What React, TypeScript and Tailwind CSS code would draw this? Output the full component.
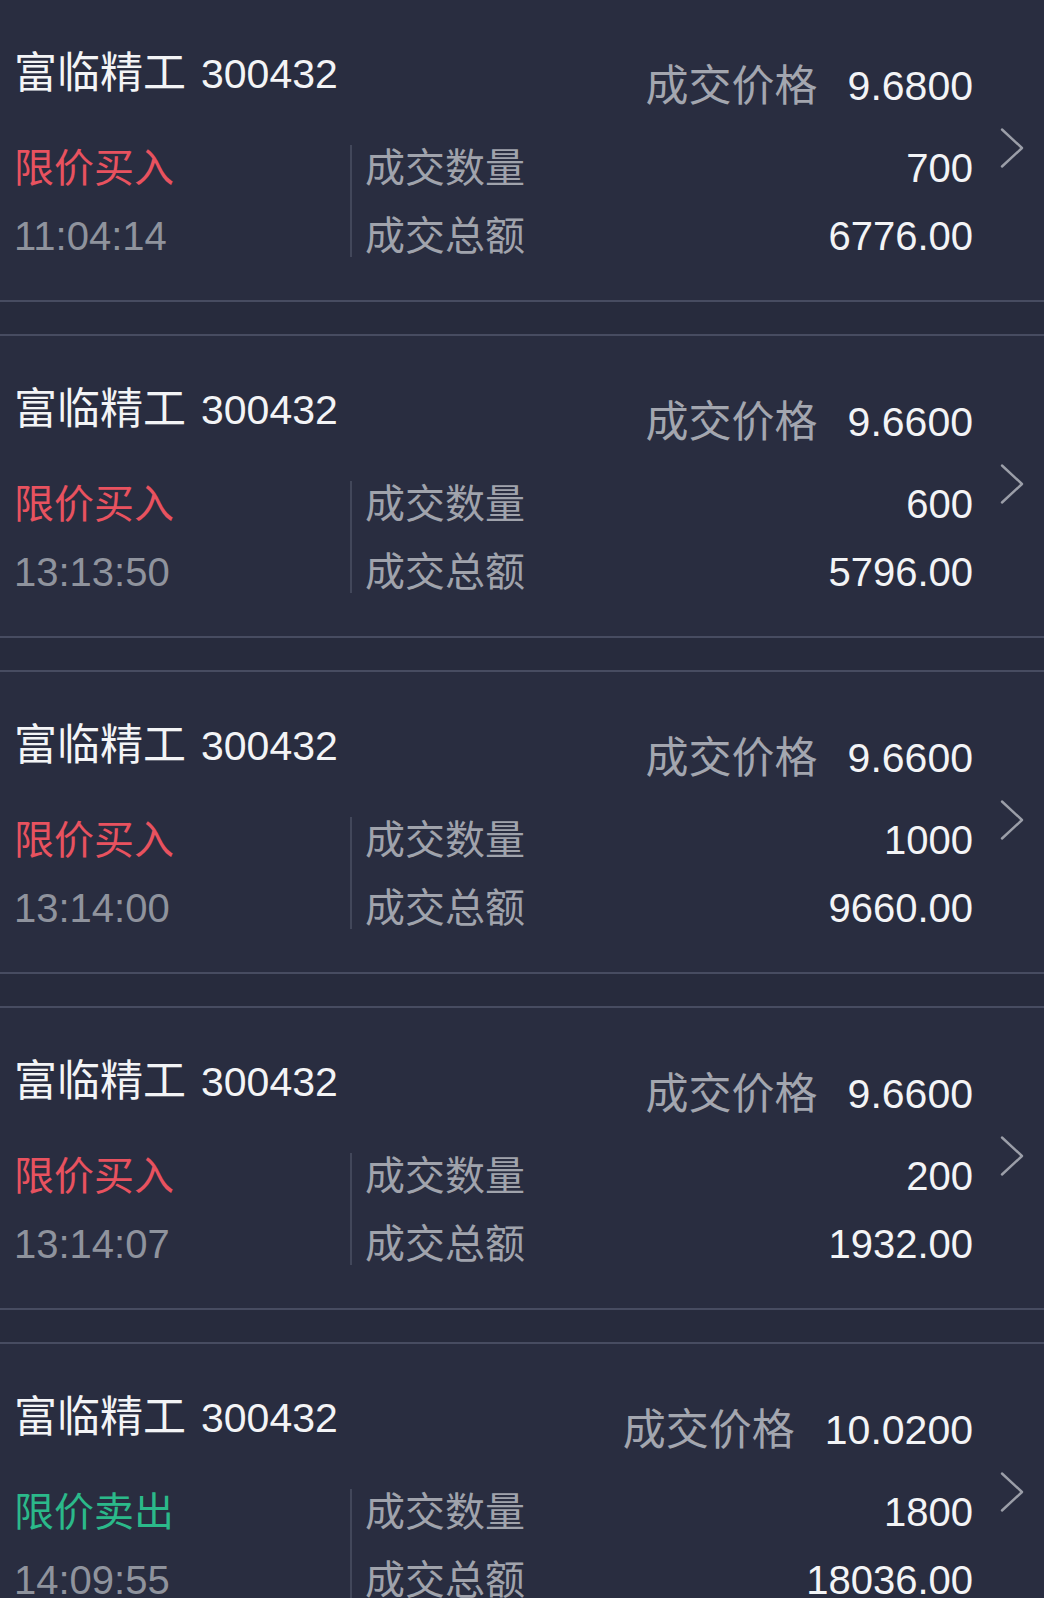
import type { ReactNode } from 'react';

type Trade = {
  side: 'buy' | 'sell';
  time: string;
  price: string;
  qty: string;
  amount: string;
};

const trades: Trade[] = [
  { side: 'buy', time: '11:04:14', price: '9.6800', qty: '700', amount: '6776.00' },
  { side: 'buy', time: '13:13:50', price: '9.6600', qty: '600', amount: '5796.00' },
  { side: 'buy', time: '13:14:00', price: '9.6600', qty: '1000', amount: '9660.00' },
  { side: 'buy', time: '13:14:07', price: '9.6600', qty: '200', amount: '1932.00' },
  { side: 'sell', time: '14:09:55', price: '10.0200', qty: '1800', amount: '18036.00' },
];

function Chevron() {
  return (
    <svg width="26" height="40" viewBox="0 0 26 40" fill="none" className="block">
      <polyline
        points="3,1.5 23,20 3,38.5"
        stroke="#9b9ea8"
        strokeWidth="2.4"
        strokeLinecap="round"
        strokeLinejoin="round"
      />
    </svg>
  );
}

function Line({ children }: { children: ReactNode }) {
  return <div className="h-[40px] whitespace-nowrap">{children}</div>;
}

function TradeCard({ t }: { t: Trade }) {
  const sell = t.side === 'sell';
  return (
    <div className="flex h-[300px] bg-[#292d40]">
      {/* Main content */}
      <div className="flex flex-1 flex-col pl-[14px]">
        <div className="flex items-start justify-between pt-[53px]">
          <Line>
            <span className="text-[43px] text-[#f3f4f6]">富临精工</span>
            <span className="ml-[15px] text-[41px] text-[#f3f4f6]">300432</span>
          </Line>
          <div className="mt-[13px] flex gap-[30px]">
            <Line>
              <span className="text-[43px] text-[#a3a6af]">成交价格</span>
            </Line>
            <Line>
              <span className="text-[41px] text-[#f3f4f6]">{t.price}</span>
            </Line>
          </div>
        </div>

        <div className="mt-[39px] flex h-[112px]">
          <div className="flex w-[336px] flex-col gap-[28px] pt-[3px]">
            <Line>
              <span className={sell ? 'text-[#2bb98a]' : 'text-[#e8525f]'}>
                {sell ? '限价卖出' : '限价买入'}
              </span>
            </Line>
            <Line>
              <span className="text-[#8f939d]">{t.time}</span>
            </Line>
          </div>
          <div className="w-[2px] bg-[#42475a]" />
          <div className="flex flex-col gap-[28px] pl-[13px] pt-[3px]">
            <Line>
              <span className="text-[#a0a3ac]">成交数量</span>
            </Line>
            <Line>
              <span className="text-[#a0a3ac]">成交总额</span>
            </Line>
          </div>
          <div className="flex flex-1 flex-col items-end gap-[28px] pt-[3px]">
            <Line>
              <span className="text-[#f3f4f6]">{t.qty}</span>
            </Line>
            <Line>
              <span className="text-[#f3f4f6]">{t.amount}</span>
            </Line>
          </div>
        </div>
      </div>

      {/* Row arrow */}
      <div className="w-[71px] pl-[26px] pt-[128px]">
        <Chevron />
      </div>
    </div>
  );
}

export default function App() {
  return (
    <main className="h-[1598px] w-[1044px] overflow-hidden bg-[#282c3e] font-['Liberation_Sans','Noto_Sans_CJK_SC',sans-serif] text-[40px] leading-[40px]">
      {trades.map((t, i) => (
        <div key={i}>
          <TradeCard t={t} />
          <div className="h-[2px] bg-[#474c61]" />
          <div className="h-[32px] bg-[#272b3d]" />
          <div className="h-[2px] bg-[#474c61]" />
        </div>
      ))}
    </main>
  );
}
